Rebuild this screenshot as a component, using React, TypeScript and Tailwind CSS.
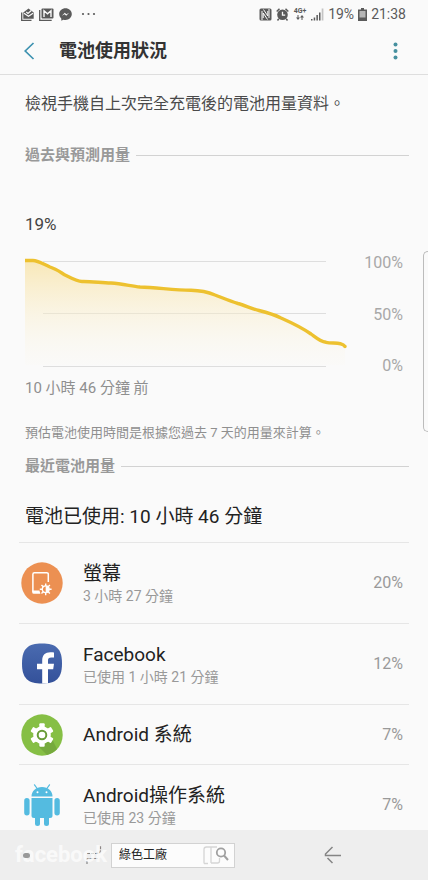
import type { ReactNode } from "react";

type Usage = {
  name: string;
  detail?: string;
  percent: string;
  icon: ReactNode;
};

function ScreenIcon() {
  return (
    <svg className="size-[42px]" viewBox="0 0 42 42" aria-hidden="true">
      <circle cx="21" cy="21" r="20.7" fill="#ec9052" />
      <path d="M27.300 20V12.200a1.500 1.500 0 0 0-1.500-1.500H13.400a1.500 1.500 0 0 0-1.500 1.500v17.600" fill="none" stroke="#fff" strokeWidth="1.500" />
      <path d="M11.200 28.400h7.200l1 3.400h-6.600a1.600 1.600 0 0 1-1.600-1.600z" fill="#fff" />
      <g transform="translate(24.700 27.300)">
        <path d="M0-5.900V5.900M-5.900 0H5.900M-4.200-4.200 4.200 4.200M4.200-4.200-4.200 4.200" stroke="#fff" strokeWidth="1.400" />
        <circle r="3.400" fill="#ec9052" stroke="#fff" strokeWidth="1.300" />
        <path d="M0-3.200a3.200 3.200 0 0 1 0 6.400z" fill="#fff" />
      </g>
    </svg>
  );
}

function FacebookIcon() {
  return (
    <svg className="size-[42px]" viewBox="0 0 42 42" aria-hidden="true">
      <defs>
        <linearGradient id="fb" x1="0" y1="0" x2="0" y2="1">
          <stop offset="0" stopColor="#4a6bb0" />
          <stop offset="1" stopColor="#34519a" />
        </linearGradient>
      </defs>
      <path d="M21 .5C35 .5 41 5.500 41 20.500S35 40.500 21 40.500 1 35.500 1 20.500 7 .5 21 .5Z" fill="url(#fb)" />
      <path d="M21.200 40.500V26.200h-5.200v-5.400h5.200v-3.300c0-5.400 3-8.300 8.200-8.300 1.600 0 2.800.1 3.600.3v5h-2.700c-2.500 0-3.300 1.100-3.300 3.300v3h6l-.8 5.400h-5.200v14.300Z" fill="#fff" />
    </svg>
  );
}

function SystemIcon() {
  return (
    <svg className="size-[42px]" viewBox="0 0 42 42" aria-hidden="true">
      <circle cx="21" cy="21" r="20.700" fill="#86bf45" />
      <path d="m31.500 26 4.500 9A20.700 20.700 0 0 1 26 41l-9-9z" fill="#76aa3d" />
      <g transform="translate(21 21)" fill="#fff">
        <circle r="8.800" />
        <rect x="-2.700" y="-11.800" width="5.400" height="23.600" rx="1" />
        <rect x="-2.700" y="-11.800" width="5.400" height="23.600" rx="1" transform="rotate(60)" />
        <rect x="-2.700" y="-11.800" width="5.400" height="23.600" rx="1" transform="rotate(120)" />
        <circle r="4.300" fill="#fff" stroke="#699c38" strokeWidth="2" />
      </g>
    </svg>
  );
}

function AndroidIcon() {
  return (
    <svg className="size-[42px]" viewBox="0 0 42 42" aria-hidden="true">
      <g fill="#54bbe0">
        <path d="M10.500 12.500C10.500 7 15 3 21 3s10.500 4 10.500 9.500z" />
        <path d="m13.500.8 3 4.200M28.500.8l-3 4.200" stroke="#54bbe0" strokeWidth="1.200" strokeLinecap="round" />
        <path d="M10.500 14h21v17.500a2.500 2.500 0 0 1-2.500 2.500H13a2.500 2.500 0 0 1-2.500-2.500z" />
        <rect x="3.200" y="14" width="5.400" height="17.500" rx="2.700" />
        <rect x="33.400" y="14" width="5.400" height="17.500" rx="2.700" />
        <rect x="14" y="30" width="5" height="12" rx="2.500" />
        <rect x="23" y="30" width="5" height="12" rx="2.500" />
      </g>
      <circle cx="16.500" cy="8.300" r="1" fill="#fff" />
      <circle cx="25.500" cy="8.300" r="1" fill="#fff" />
    </svg>
  );
}

const usages: Usage[] = [
  { name: "螢幕", detail: "3 小時 27 分鐘", percent: "20%", icon: <ScreenIcon /> },
  { name: "Facebook", detail: "已使用 1 小時 21 分鐘", percent: "12%", icon: <FacebookIcon /> },
  { name: "Android 系統", percent: "7%", icon: <SystemIcon /> },
  { name: "Android操作系統", detail: "已使用 23 分鐘", percent: "7%", icon: <AndroidIcon /> },
];

function StatusBar() {
  return (
    <div className="flex h-7 shrink-0 items-center justify-between pr-[22px] pl-[21px] text-[#5a5a5a]">
      <div className="flex items-center gap-[5px]">
        <svg className="size-[13px]" viewBox="0 0 13 13" aria-hidden="true">
          <path d="M.7 4.500v7.800h9.800" fill="none" stroke="currentColor" strokeWidth="1.300" />
          <path d="M2.300 4.500 7.500.6l5.200 3.900v6.300H2.300z" fill="currentColor" />
          <path d="m3 5.300 4.500 3 4.500-3M5.300 4l1.700 1.500L10.300 2.500" fill="none" stroke="#fafafa" strokeWidth="1.200" />
        </svg>
        <svg className="h-[13px] w-[15px]" viewBox="0 0 15 13" aria-hidden="true">
          <path d="M.7 2v10.300h12" fill="none" stroke="currentColor" strokeWidth="1.300" />
          <rect x="2.500" y=".5" width="12" height="10" rx="1" fill="currentColor" />
          <path d="M5 9V2.800l3.500 3 3.500-3V9" fill="none" stroke="#fafafa" strokeWidth="1.400" />
        </svg>
        <svg className="size-[13px]" viewBox="0 0 13 13" aria-hidden="true">
          <path d="M6.500.3C3 .3.200 2.800.200 6.100c0 1.800.8 3.300 2.100 4.400v2.300l2.100-1.100c.7.200 1.400.3 2.100.3 3.500 0 6.300-2.600 6.300-5.900S10 .3 6.500.3Z" fill="currentColor" />
          <path d="m2.800 7.800 3-3 1.600 1.500 2.800-1.500-3 3-1.600-1.500z" fill="#fafafa" />
        </svg>
        <svg className="ml-1 h-[13px] w-4" viewBox="0 0 16 13" fill="currentColor" aria-hidden="true">
          <circle cx="2" cy="6" r="1.100" />
          <circle cx="7.500" cy="6" r="1.100" />
          <circle cx="13" cy="6" r="1.100" />
        </svg>
      </div>
      <div className="flex items-center gap-1">
        <svg className="size-[13px]" viewBox="0 0 13 13" aria-hidden="true">
          <path d="M2 .5h9A1.500 1.500 0 0 1 12.500 2v9a1.500 1.500 0 0 1-1.500 1.500H2A1.500 1.500 0 0 1 .5 11V2A1.500 1.500 0 0 1 2 .5Z" fill="currentColor" />
          <path d="M3 12V3M10 1v9M4.500 1.500 8.800 8V3M8.500 11.500 4.200 5v5" fill="none" stroke="#fafafa" strokeWidth="1" />
        </svg>
        <svg className="size-[13px]" viewBox="0 0 13 13" aria-hidden="true">
          <circle cx="6.500" cy="6.800" r="5.300" fill="currentColor" />
          <path d="M.7 3.500 3.500.8M12.300 3.500 9.500.8M2.800 10.800 1.500 12.500M10.200 10.800l1.300 1.700" stroke="currentColor" strokeWidth="1.500" />
          <path d="M6.500 3.800v3.300h2.700" fill="none" stroke="#fafafa" strokeWidth="1.300" />
        </svg>
        <div className="flex w-[14px] flex-col items-center">
          <span className="text-[7px] leading-[7px] font-bold">4G+</span>
          <svg className="h-[5px] w-2" viewBox="0 0 8 5" fill="currentColor" aria-hidden="true">
            <path d="M1.500 0h1v2.500H4L2 5 0 2.500h1.500zM5.500 5h1V2.500H8L6 0 4 2.500h1.500z" />
          </svg>
        </div>
        <svg className="size-[13px]" viewBox="0 0 13 13" fill="currentColor" aria-hidden="true">
          <path d="M0 11h1.500v1.500H0zM2.700 9.500h1.500v3H2.700zM5.400 7h1.500v5.500H5.400zM8 4.500h1.500v8H8z" />
          <path d="M10.700.5h1.700v12h-1.700z" fill="#c4c4c4" />
        </svg>
        <span className="text-sm">19%</span>
        <svg className="h-[13px] w-[9px]" viewBox="0 0 9 13" aria-hidden="true">
          <path d="M3 0h3v1.500h3V13H0V1.500h3z" fill="currentColor" />
          <path d="M1.500 3h6v6.500h-6z" fill="#b5b5b5" />
        </svg>
        <span className="text-sm">21:38</span>
      </div>
    </div>
  );
}

function SectionTitle({ children }: { children: string }) {
  return (
    <div className="flex items-center gap-[6px] pr-[19px] pl-[25px]">
      <h2 className="text-[15px] leading-5 font-bold text-[#999]">{children}</h2>
      <div className="h-px flex-1 bg-[#d2d2d2]" />
    </div>
  );
}

function BatteryChart() {
  const line =
    "M0 5.500H8C13 5.500 18 9 25 12C31 14 35 17 40 20C46 23 52 26.500 57 26.500C66 26.300 75 27.600 86 28C97 28.800 106 31 115 32C132 32.500 148 35 166 35.300C177 35.500 184 37.500 190 40C199 43.500 206 46.500 213 48.500C220 50.300 227 54 234 55.500C242 57.500 250 60 256 63C265 67 276 72 286 79C292 83.500 295 86.500 301 87.300C308 88.800 317 86.500 320 91.500";
  return (
    <svg className="h-[115px] w-[323px] shrink-0" viewBox="0 0 323 115" role="img" aria-label="電池用量">
      <defs>
        <linearGradient id="area" x1="0" y1="0" x2="0" y2="1">
          <stop offset="0" stopColor="#f8e3a6" stopOpacity=".8" />
          <stop offset="1" stopColor="#fbf6e8" stopOpacity=".1" />
        </linearGradient>
      </defs>
      <path d="M18 6.500H301M18 58.500H301M18 111.500H301" stroke="#dedede" />
      <path d={line + "V110H0Z"} fill="url(#area)" />
      <path d={line} fill="none" stroke="#edc12f" strokeWidth="3.400" />
      <circle cx="320" cy="91.500" r="1.700" fill="#edc12f" />
    </svg>
  );
}

function NavBar() {
  return (
    <nav className="relative grid h-[50px] shrink-0 grid-cols-[153px_1fr_156px] items-center bg-[#eeeeee] text-[#858585]">
      <button type="button" aria-label="最近使用" className="flex justify-end pr-[51px]">
        <svg className="h-5 w-4" viewBox="0 0 16 20" fill="none" stroke="currentColor" strokeWidth="1.200" aria-hidden="true">
          <path d="M1 8.500h9q4.500 0 4.500-4V1M1 19v-5.500h11" strokeDasharray="3 1" />
        </svg>
      </button>
      <span />
      <button type="button" aria-label="返回" className="flex pl-[52px]">
        <svg className="h-5 w-[18px]" viewBox="0 0 18 20" fill="none" stroke="currentColor" strokeWidth="1.500" aria-hidden="true">
          <path d="M8.500 2 1.500 9v1.500H17M3.500 13l5 5" />
        </svg>
      </button>
      <div className="absolute inset-y-0 left-[15px] flex items-center gap-[6px]">
        <span className="w-[90px] text-[22px] leading-6 font-bold text-white/70">facebook</span>
        <div className="relative flex h-[25px] w-[124px] items-center border border-[#d2d2d2] bg-[#fcfcfc]">
          <input
            aria-label="搜尋"
            defaultValue="綠色工廠"
            className="w-full bg-transparent pl-[7px] text-xs leading-4 text-[#222] outline-none"
          />
          <svg className="absolute right-[5px] h-5 w-[26px]" viewBox="0 0 26 20" fill="none" aria-hidden="true">
            <path d="M1 18.500V4.500A2.500 2.500 0 0 1 3.500 2H14M8 2v16M1 18.500h4M8 18h6.500q2 0 2-2V13" stroke="#d5d5d5" strokeWidth="1.300" />
            <circle cx="18" cy="7.500" r="4.200" stroke="#a0a0a0" strokeWidth="1.800" />
            <path d="m21 10.500 4 4.500" stroke="#a0a0a0" strokeWidth="2" />
          </svg>
        </div>
      </div>
      <span className="absolute top-[23px] left-[23px] h-[5px] w-[7px] rounded-full bg-[#999]" />
    </nav>
  );
}

export default function App() {
  return (
    <div lang="zh-Hant" className="relative flex h-screen flex-col overflow-hidden bg-[#fafafa] [font-family:Roboto,'Noto_Sans_CJK_TC',sans-serif]">
      <StatusBar />
      <header className="flex h-[47px] shrink-0 items-center border-b border-[#dedede] pr-[27px] pl-6">
        <button type="button" aria-label="返回">
          <svg className="h-[18px] w-[11px]" viewBox="0 0 11 18" fill="none" stroke="#3d92b0" strokeWidth="1.700" aria-hidden="true">
            <path d="M9.500 1 1.200 9l8.300 8" />
          </svg>
        </button>
        <h1 className="ml-6 flex-1 text-lg leading-7 font-bold text-[#333]">電池使用狀況</h1>
        <button type="button" aria-label="更多選項">
          <svg className="h-[18px] w-[11px]" viewBox="0 0 11 18" fill="#46909f" aria-hidden="true">
            <circle cx="5.500" cy="2.500" r="2" />
            <circle cx="5.500" cy="9" r="2" />
            <circle cx="5.500" cy="15.500" r="2" />
          </svg>
        </button>
      </header>

      <main className="min-h-0 flex-1 overflow-y-auto pt-[17px] [scrollbar-width:none]">
        <p className="px-[25px] text-base leading-6 text-[#4a4a4a]">檢視手機自上次完全充電後的電池用量資料。</p>
        <div className="mt-[29px]">
          <SectionTitle>過去與預測用量</SectionTitle>
        </div>
        <p className="mt-[47px] px-[25px] text-[17px] leading-6 text-[#444]">19%</p>
        <div className="mt-[19px] flex justify-between px-[25px]">
          <BatteryChart />
          <div className="-mt-[2px] -mb-[6px] flex flex-col justify-between text-right text-base leading-5 text-[#a8a8a8]">
            <span>100%</span>
            <span>50%</span>
            <span>0%</span>
          </div>
        </div>
        <p className="mt-[6px] px-[25px] text-[15px] leading-6 text-[#8f8f8f]">10 小時 46 分鐘 前</p>
        <p className="mt-[23px] px-[25px] text-[13px] leading-5 text-[#8f8f8f]">預估電池使用時間是根據您過去 7 天的用量來計算。</p>
        <div className="mt-[13px]">
          <SectionTitle>最近電池用量</SectionTitle>
        </div>
        <h3 className="mt-[27px] mb-[11px] px-[25px] text-[19px] leading-7 text-[#222]">電池已使用: 10 小時 46 分鐘</h3>
        <ul className="mx-[19px]">
          {usages.map((item) => (
            <li
              key={item.name}
              className={"flex items-center border-t border-[#e6e6e6] pr-[6px] pl-[2px] " + (item.detail ? "h-[81px]" : "h-[60px]")}
            >
              {item.icon}
              <div className="ml-5 flex-1">
                <p className="text-[19px] leading-[26px] text-[#222]">{item.name}</p>
                {item.detail && <p className="text-sm leading-[18px] text-[#999]">{item.detail}</p>}
              </div>
              <span className="text-base leading-5 text-[#999]">{item.percent}</span>
            </li>
          ))}
        </ul>
      </main>

      <NavBar />
      <div className="absolute top-[251px] right-0 h-[181px] w-[5px] rounded-l-[5px] border border-r-0 border-[#bcbcbc]" />
    </div>
  );
}
